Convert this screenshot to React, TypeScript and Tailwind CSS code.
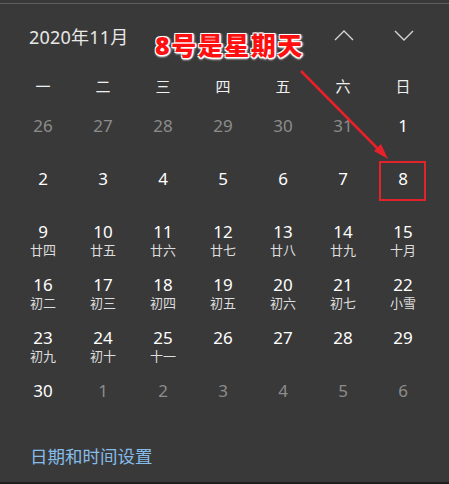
import React from "react";

const weekDays = ["一", "二", "三", "四", "五", "六", "日"];

type Day = { n: number; lunar?: string; dim?: boolean };

const weeks: Day[][] = [
  [
    { n: 26, dim: true },
    { n: 27, dim: true },
    { n: 28, dim: true },
    { n: 29, dim: true },
    { n: 30, dim: true },
    { n: 31, dim: true },
    { n: 1 },
  ],
  [{ n: 2 }, { n: 3 }, { n: 4 }, { n: 5 }, { n: 6 }, { n: 7 }, { n: 8 }],
  [
    { n: 9, lunar: "廿四" },
    { n: 10, lunar: "廿五" },
    { n: 11, lunar: "廿六" },
    { n: 12, lunar: "廿七" },
    { n: 13, lunar: "廿八" },
    { n: 14, lunar: "廿九" },
    { n: 15, lunar: "十月" },
  ],
  [
    { n: 16, lunar: "初二" },
    { n: 17, lunar: "初三" },
    { n: 18, lunar: "初四" },
    { n: 19, lunar: "初五" },
    { n: 20, lunar: "初六" },
    { n: 21, lunar: "初七" },
    { n: 22, lunar: "小雪" },
  ],
  [
    { n: 23, lunar: "初九" },
    { n: 24, lunar: "初十" },
    { n: 25, lunar: "十一" },
    { n: 26 },
    { n: 27 },
    { n: 28 },
    { n: 29 },
  ],
  [
    { n: 30 },
    { n: 1, dim: true },
    { n: 2, dim: true },
    { n: 3, dim: true },
    { n: 4, dim: true },
    { n: 5, dim: true },
    { n: 6, dim: true },
  ],
];

function Chevron({ up }: { up?: boolean }) {
  return (
    <svg width="20" height="11" viewBox="0 0 20 11" className="text-[#d4d4d4]">
      <polyline
        points={up ? "1,10 10,1 19,10" : "1,1 10,10 19,1"}
        fill="none"
        stroke="currentColor"
        strokeWidth="1.4"
      />
    </svg>
  );
}

export default function App() {
  return (
    <div className="relative w-[449px] h-[484px] bg-[#393939] border-b-2 border-[#1e1e1e] font-['Noto_Sans','Noto_Sans_CJK_SC',sans-serif] overflow-hidden">
      <div className="h-[3px]" />
      <div className="h-px bg-[#5e5e5e]" />

      {/* header */}
      <div className="h-[66px] flex items-center pl-[29px]">
        <div className="text-[18px] text-[#e8e8e8] tracking-[0.2px]">2020年11月</div>
        <div className="ml-auto flex items-center gap-[40px] pr-[35px] -mt-[4px]">
          <Chevron up />
          <Chevron />
        </div>
      </div>

      {/* calendar */}
      <div className="ml-[13px] w-[420px]">
        <div className="grid grid-cols-7 h-[32px] items-center">
          {weekDays.map((d) => (
            <div key={d} className="text-center text-[15px] text-[#f0f0f0]">
              {d}
            </div>
          ))}
        </div>
        {weeks.map((w, i) => (
          <div key={i} className="grid grid-cols-7">
            {w.map((d, j) => (
              <div key={j} className="h-[53px] pt-[14px] flex flex-col items-center">
                <div
                  className={
                    "text-[17px] leading-[20px] " +
                    (d.dim ? "text-[#8c8c8c]" : "text-white")
                  }
                >
                  {d.n}
                </div>
                {d.lunar && (
                  <div className="text-[13px] leading-[16px] text-[#dedede]">{d.lunar}</div>
                )}
              </div>
            ))}
          </div>
        ))}
      </div>

      <div className="mt-[24px] pl-[30px] text-[17.5px] leading-[24px] text-[#86bcea]">
        日期和时间设置
      </div>

      {/* annotation */}
      <div className="absolute left-[155px] top-[28px] text-[25px] leading-[34px] font-black text-[#ff1010] tracking-[1.5px] [text-shadow:1px_1px_0_#fff,-1px_-1px_0_#fff,1px_-1px_0_#fff,-1px_1px_0_#fff,0_2px_2px_#fff,2px_0_2px_#fff]">
        8号是星期天
      </div>
      <svg className="absolute left-0 top-0" width="449" height="484">
        <line x1="301" y1="71" x2="381" y2="152" stroke="#e8202a" strokeWidth="2.5" />
        <polygon points="388,159 374,151 381,144" fill="#e8202a" />
      </svg>
      <div className="absolute left-[379px] top-[161px] w-[47px] h-[40px] border-2 border-[#e3232b]" />
    </div>
  );
}
